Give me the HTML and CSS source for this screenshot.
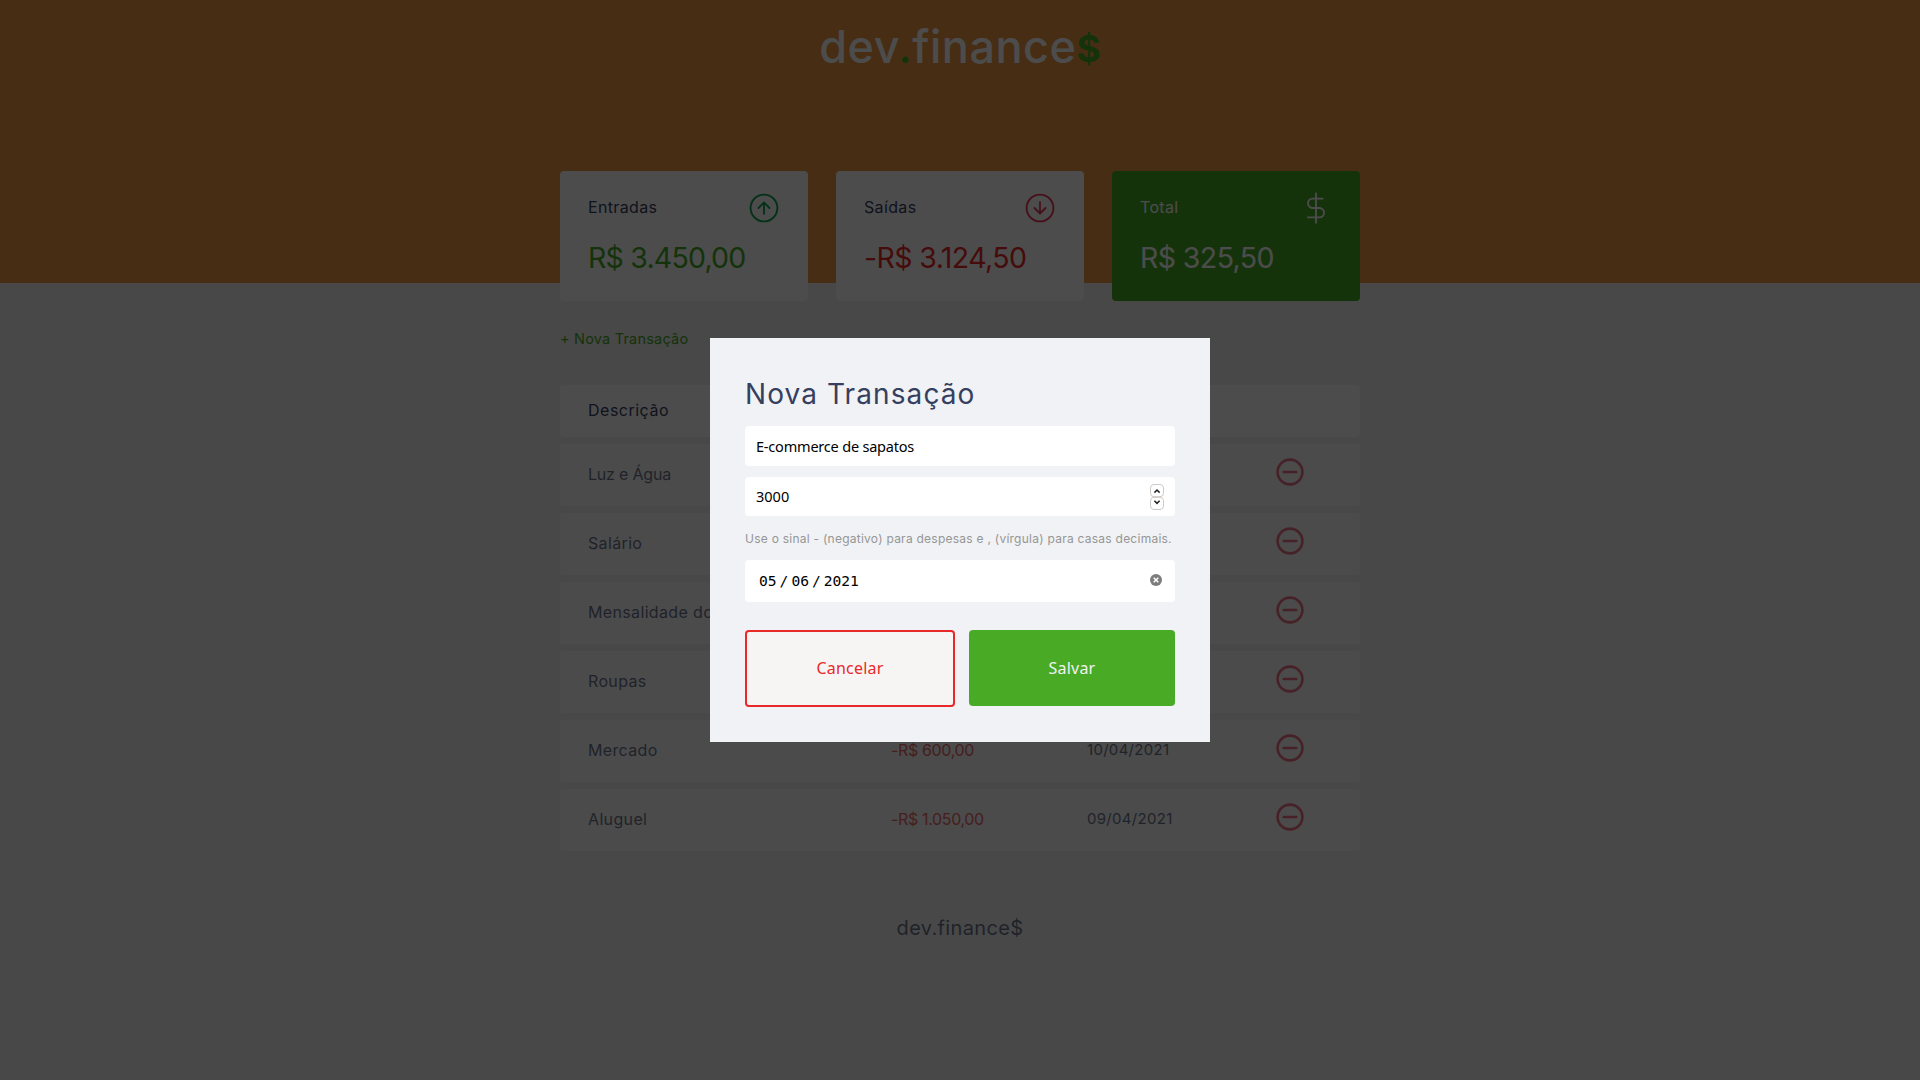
FILE: index.html
```html
<!DOCTYPE html>
<html lang="pt-BR">
<head>
<meta charset="utf-8">
<title>dev.finance$</title>
<link rel="stylesheet" href="styles.css">
</head>
<body>
<header class="banner">
  <h1 class="logo"><span class="logo-name">dev<span class="logo-accent">.</span>finance</span><span class="logo-accent logo-dollar">$</span></h1>
</header>
<main class="container">
  <section class="balance">
    <article class="card">
      <h3 class="card-head"><span>Entradas</span>
        <svg class="icon icon-income" viewBox="0 0 32 32"><circle cx="16" cy="16" r="13.4"/><path d="M16 21.7V11M10.5 16 16 10.5 21.5 16"/></svg>
      </h3>
      <p class="card-value value-income">R$ 3.450,00</p>
    </article>
    <article class="card">
      <h3 class="card-head"><span>Saídas</span>
        <svg class="icon icon-expense" viewBox="0 0 32 32"><circle cx="16" cy="16" r="13.4"/><path d="M16 10.3V21M10.5 16 16 21.5 21.5 16"/></svg>
      </h3>
      <p class="card-value value-expense">-R$ 3.124,50</p>
    </article>
    <article class="card card-total">
      <h3 class="card-head"><span>Total</span>
        <svg class="icon icon-total" viewBox="0 0 24 24"><path d="M12 1v22M17 5H9.5a3.5 3.5 0 0 0 0 7h5a3.5 3.5 0 0 1 0 7H6"/></svg>
      </h3>
      <p class="card-value value-total">R$ 325,50</p>
    </article>
  </section>
  <a class="new">+ Nova Transação</a>
  <section class="table">
    <div class="row row-head"><span>Descrição</span></div>
    <div class="row"><span class="tight">Luz e Água</span><span></span><span></span><svg class="minus" viewBox="0 0 28 28"><circle cx="14" cy="14" r="12.4"/><path d="M7.7 14h12.6"/></svg></div>
    <div class="row"><span>Salário</span><span></span><span></span><svg class="minus" viewBox="0 0 28 28"><circle cx="14" cy="14" r="12.4"/><path d="M7.7 14h12.6"/></svg></div>
    <div class="row"><span>Mensalidade do</span><span></span><span></span><svg class="minus" viewBox="0 0 28 28"><circle cx="14" cy="14" r="12.4"/><path d="M7.7 14h12.6"/></svg></div>
    <div class="row"><span>Roupas</span><span></span><span></span><svg class="minus" viewBox="0 0 28 28"><circle cx="14" cy="14" r="12.4"/><path d="M7.7 14h12.6"/></svg></div>
    <div class="row"><span>Mercado</span><span class="amount">-R$ 600,00</span><span class="date">10/04/2021</span><svg class="minus" viewBox="0 0 28 28"><circle cx="14" cy="14" r="12.4"/><path d="M7.7 14h12.6"/></svg></div>
    <div class="row"><span>Aluguel</span><span class="amount">-R$ 1.050,00</span><span class="date">09/04/2021</span><svg class="minus" viewBox="0 0 28 28"><circle cx="14" cy="14" r="12.4"/><path d="M7.7 14h12.6"/></svg></div>
  </section>
</main>
<footer class="footer">dev.finance$</footer>
<div class="overlay">
  <div class="modal">
    <h2 class="modal-title">Nova Transação</h2>
    <div class="field"><span>E-commerce de sapatos</span></div>
    <div class="field field-amount"><span>3000</span>
      <svg class="spinner" viewBox="0 0 14 26"><rect x=".5" y=".5" width="13" height="12.2" rx="3.5"/><rect x=".5" y="13.3" width="13" height="12.2" rx="3.5"/><path d="M4.4 8.6 7 6l2.6 2.6M4.4 16.8 7 19.4l2.6-2.6"/></svg>
    </div>
    <small class="hint">Use o sinal - (negativo) para despesas e , (vírgula) para casas decimais.</small>
    <div class="field field-date"><span class="date-parts"><span>05</span><span>/</span><span>06</span><span>/</span><span>2021</span></span>
      <svg class="clear" viewBox="0 0 12 12"><circle cx="6" cy="6" r="6"/><path d="m3.7 3.7 4.6 4.6m0-4.6L3.7 8.3"/></svg>
    </div>
    <div class="actions">
      <button class="btn btn-cancel">Cancelar</button>
      <button class="btn btn-save">Salvar</button>
    </div>
  </div>
</div>
</body>
</html>
```
FILE: styles.css
```css
* { box-sizing: border-box; margin: 0; padding: 0; }
body { background: #f0f2f5; font: 400 16px/24px Inter, sans-serif; color: #363f5f; height: 1080px; overflow: hidden; }
h1, h2, h3 { font-weight: 400; }
.banner { height: 283px; background: #ed9843; text-align: center; padding-top: 17px; }
.logo { font-size: 45px; line-height: 60px; color: #fff; display: flex; justify-content: center; }
.logo-name { font-weight: 500; letter-spacing: .5px; }
.logo-accent { color: #49aa26; }
.logo-dollar { font-size: 37px; line-height: 64px; font-weight: 700; }
.container { width: 800px; margin: -112px auto 0; }
.balance { display: grid; grid-template-columns: repeat(3, 1fr); gap: 28px; }
.card { height: 130px; background: #fff; border-radius: 4px; padding: 21px 28px; }
.card-head { display: flex; justify-content: space-between; align-items: center; height: 32px; font-size: 16px; letter-spacing: .35px; }
.card-head span { padding-bottom: 2px; }
.card-value { margin-top: 12px; font-size: 28.5px; line-height: 44px; white-space: nowrap; }
.card-total { background: #49aa26; color: #fff; }
.icon { width: 32px; height: 32px; fill: none; stroke-width: 1.9; stroke-linecap: round; stroke-linejoin: round; }
.icon-income { stroke: #12a454; }
.icon-expense { stroke: #e83f5b; }
.icon-total { stroke: #fff; stroke-width: 1.4; }
.value-income { color: #49aa26; letter-spacing: -.8px; }
.value-expense { color: #e92929; letter-spacing: -.6px; }
.value-total { letter-spacing: -.6px; }
.new { display: block; margin-top: 26px; font-size: 14.5px; letter-spacing: .2px; color: #49aa26; }
.table { margin-top: 34px; display: grid; gap: 7px; }
.row { display: grid; grid-template-columns: 303px 196px 189px 28px; align-items: center; height: 62px; padding: 0 28px 2px; background: #fff; border-radius: 4px; opacity: .7; letter-spacing: .35px; }
.row-head { height: 52px; opacity: 1; letter-spacing: .5px; }
.tight { letter-spacing: -.2px; }
.amount { color: #e92929; letter-spacing: -.35px; }
.date { font-size: 15px; letter-spacing: .3px; }
.minus { width: 28px; height: 28px; margin-top: -4px; fill: none; stroke: #e83f5b; stroke-width: 2.6; stroke-linecap: round; }
.footer { margin-top: 65px; text-align: center; font-size: 20px; letter-spacing: .35px; opacity: .7; }
.overlay { position: fixed; inset: 0; background: rgba(0, 0, 0, .7); display: flex; justify-content: center; align-items: center; }
.modal { width: 500px; height: 404px; background: #f0f2f5; padding: 35px; display: flex; flex-direction: column; }
.modal-title { font-size: 28px; line-height: 42px; letter-spacing: 1.1px; white-space: nowrap; }
.field { display: flex; justify-content: space-between; align-items: center; height: 40px; margin-top: 11px; padding: 0 12px 0 11px; background: #fff; border-radius: 4px; color: #000; font-family: "Noto Sans", sans-serif; font-size: 14.5px; letter-spacing: -.2px; }
.field-amount { height: 39px; padding-right: 11px; letter-spacing: 0; }
.field-amount span { padding-bottom: 1px; }
.hint { margin-top: 11px; font-size: 12px; line-height: 24px; letter-spacing: .25px; color: #969696; white-space: nowrap; }
.field-date { height: 42px; margin-top: 9px; padding: 0 13px 0 14px; font-family: "DejaVu Sans Mono", monospace; font-size: 14.6px; letter-spacing: 0; }
.date-parts { display: flex; gap: 3px; }
.spinner { width: 14px; height: 26px; fill: #fff; stroke: #cfc9c5; }
.spinner path { fill: none; stroke: #222; stroke-width: 1.5; }
.clear { width: 12px; height: 12px; margin-bottom: 2px; fill: #7d7d7d; }
.clear path { stroke: #fff; stroke-width: 1.5; }
.actions { display: flex; gap: 14px; margin-top: 28px; align-items: flex-start; }
.btn { height: 76px; width: 206px; border: 0; border-radius: 4px; font: 16px "Noto Sans", sans-serif; letter-spacing: .2px; }
.btn-cancel { width: 210px; height: 77px; padding-bottom: 2px; background: #f6f5f4; border: 2px solid #e92929; color: #e92929; }
.btn-save { background: #49aa26; color: #f0f2f5; }
```
